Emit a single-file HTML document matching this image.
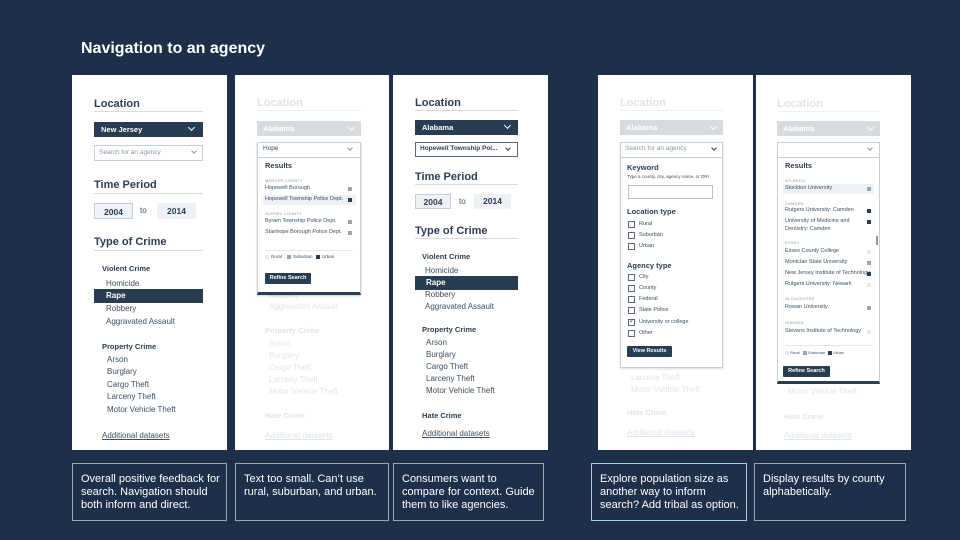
<!DOCTYPE html>
<html><head><meta charset="utf-8"><style>
*{margin:0;padding:0;box-sizing:border-box}
body{width:960px;height:540px;background:#1e2f4a;position:relative;overflow:hidden;font-family:"Liberation Sans",Arial,sans-serif}
.a{position:absolute}
.p{position:absolute;top:75px;height:375px;background:#fff}
.t{position:absolute;white-space:nowrap;line-height:1}
.h{font-size:11px;font-weight:bold;color:#2b3e52}
.ul{position:absolute;height:1px;background:#d5dbe2}
.i{font-size:8px;color:#3d4e60}
.sb{font-size:7.5px;font-weight:bold;color:#2b3e52}
.f{color:#dfe4ea!important}
.dk{position:absolute;background:#283c52;color:#fff;font-size:7.5px;font-weight:bold;padding-left:7px}
.box{position:absolute;border:1px solid #c6ced8;background:#fff}
.yr{position:absolute;background:#eef1f5;font-size:8.5px;font-weight:bold;color:#2b3e52;text-align:center}
.chev{position:absolute;width:5px;height:5px;border-right:1.5px solid currentColor;border-bottom:1.5px solid currentColor;transform:rotate(45deg)}
.cap{position:absolute;top:463px;height:58px;border:1.5px solid #9aa6b4;color:#fff;font-size:11px;line-height:13px;padding:9px 0 0 8px;white-space:nowrap}
.tiny{font-size:4px;color:#8a96a4;letter-spacing:.2px}
.r{font-size:5.5px;color:#3d4e60}
.sq{position:absolute;width:4px;height:4px}
.cb{position:absolute;width:7px;height:7px;border:1px solid #5a6878;background:#fff}
.btn{position:absolute;background:#283c52;color:#fff;font-size:5.5px;font-weight:bold;text-align:center;border-radius:1px}
</style></head><body>
<div class="t" style="left:81px;top:41px;font-size:16px;font-weight:bold;color:#fff">Navigation to an agency</div>

<!-- Panel 1 -->
<div class="p" style="left:72px;width:155px"></div>
<div class="t h" style="left:94px;top:99px">Location</div><div class="ul" style="left:94px;top:111px;width:109px"></div>
<div class="dk" style="left:94px;top:122px;width:109px;height:15px;line-height:15px">New Jersey<span class="chev" style="left:95px;top:3px"></span></div>
<div class="box" style="left:94px;top:145px;width:109px;height:16px"></div>
<div class="t" style="left:99px;top:150px;font-size:6.5px;color:#8a96a4">Search for an agency</div><span class="chev" style="left:192px;top:149px;color:#8a96a4;width:4px;height:4px;border-width:1px"></span>
<div class="t h" style="left:94px;top:180px">Time Period</div><div class="ul" style="left:94px;top:193px;width:109px"></div>
<div class="yr" style="left:94px;top:203px;width:39px;height:16px;line-height:16px;border:1px solid #c6ced8">2004</div>
<div class="t i" style="left:140px;top:207px">to</div>
<div class="yr" style="left:157px;top:203px;width:39px;height:16px;line-height:16px">2014</div>
<div class="t h" style="left:94px;top:237px">Type of Crime</div><div class="ul" style="left:94px;top:250px;width:109px"></div>
<div class="t sb" style="left:102px;top:265px">Violent Crime</div>
<div class="t i" style="left:106px;top:280px">Homicide</div>
<div class="dk" style="left:94px;top:289px;width:109px;height:14px;line-height:14px;font-size:8px;padding-left:12px">Rape</div>
<div class="t i" style="left:106px;top:305px">Robbery</div>
<div class="t i" style="left:106px;top:318px">Aggravated Assault</div>
<div class="t sb" style="left:102px;top:343px">Property Crime</div>
<div class="t i" style="left:107px;top:356px">Arson</div>
<div class="t i" style="left:107px;top:368px">Burglary</div>
<div class="t i" style="left:107px;top:381px">Cargo Theft</div>
<div class="t i" style="left:107px;top:393px">Larceny Theft</div>
<div class="t i" style="left:107px;top:406px">Motor Vehicle Theft</div>
<div class="t i" style="left:102px;top:432px;text-decoration:underline">Additional datasets</div>

<!-- Panel 2 -->
<div class="p" style="left:235px;width:154px"></div>
<div class="t h f" style="left:257px;top:98px">Location</div><div class="ul" style="left:257px;top:110px;width:104px;background:#eef1f4"></div>
<div class="a" style="left:257px;top:121px;width:104px;height:15px;background:#d6dbe0;color:#fff;font-size:7.5px;font-weight:bold;line-height:15px;padding-left:6px">Alabama<span class="chev" style="left:92px;top:4px"></span></div>
<div class="t sb f" style="left:265px;top:327px">Property Crime</div>
<div class="t i f" style="left:269px;top:292px">Robbery</div>
<div class="t i f" style="left:269px;top:303px">Aggravated Assault</div>
<div class="t i f" style="left:269px;top:340px">Arson</div>
<div class="t i f" style="left:269px;top:352px">Burglary</div>
<div class="t i f" style="left:269px;top:364px">Cargo Theft</div>
<div class="t i f" style="left:269px;top:376px">Larceny Theft</div>
<div class="t i f" style="left:269px;top:388px">Motor Vehicle Theft</div>
<div class="t sb f" style="left:265px;top:412px">Hate Crime</div>
<div class="t i f" style="left:265px;top:432px;text-decoration:underline">Additional datasets</div>
<div class="box" style="left:257px;top:142px;width:104px;height:153px;border-bottom:3px solid #2b3e52;box-shadow:0 1px 2px rgba(0,0,0,.2)"></div>
<div class="ul" style="left:257px;top:157px;width:104px;background:#c6ced8"></div>
<div class="t" style="left:263px;top:146px;font-size:6.5px;color:#3d4e60">Hope</div><span class="chev" style="left:348px;top:146px;color:#8a96a4;width:4px;height:4px;border-width:1px"></span>
<div class="t" style="left:265px;top:162px;font-size:7.5px;font-weight:bold;color:#2b3e52">Results</div>
<div class="t tiny" style="left:265px;top:179px">MERCER COUNTY</div>
<div class="t r" style="left:265px;top:186px">Hopewell Borough</div><div class="sq" style="left:348px;top:187px;background:#98a4b2"></div>
<div class="a" style="left:263px;top:195px;width:93px;height:10px;background:#eef1f5"></div>
<div class="t r" style="left:265px;top:197px">Hopewell Township Police Dept.</div><div class="sq" style="left:348px;top:198px;background:#283c52"></div>
<div class="t tiny" style="left:265px;top:212px">SUSSEX COUNTY</div>
<div class="t r" style="left:265px;top:219px">Byram Township Police Dept.</div><div class="sq" style="left:348px;top:220px;background:#98a4b2"></div>
<div class="t r" style="left:265px;top:230px">Stanhope Borough Police Dept.</div><div class="sq" style="left:348px;top:231px;background:#98a4b2"></div>
<div class="ul" style="left:265px;top:250px;width:88px;background:#e4e8ec"></div>
<div class="sq" style="left:265px;top:255px;background:#e4e9ef"></div><div class="t r" style="left:271px;top:255px;font-size:4.5px">Rural</div>
<div class="sq" style="left:287px;top:255px;background:#98a4b2"></div><div class="t r" style="left:293px;top:255px;font-size:4.5px">Suburban</div>
<div class="sq" style="left:316px;top:255px;background:#283c52"></div><div class="t r" style="left:322px;top:255px;font-size:4.5px">Urban</div>
<div class="btn" style="left:265px;top:273px;width:46px;height:11px;line-height:11px">Refine Search</div>

<!-- Panel 3 -->
<div class="p" style="left:393px;width:155px"></div>
<div class="t h" style="left:415px;top:98px">Location</div><div class="ul" style="left:415px;top:110px;width:103px"></div>
<div class="dk" style="left:415px;top:120px;width:103px;height:15px;line-height:15px">Alabama<span class="chev" style="left:90px;top:3px"></span></div>
<div class="box" style="left:415px;top:142px;width:103px;height:15px;border-color:#5a6878"></div>
<div class="t" style="left:420px;top:146px;font-size:6.5px;font-weight:bold;color:#2b3e52">Hopewell Township Pol...</div><span class="chev" style="left:506px;top:146px;color:#2b3e52;width:4px;height:4px"></span>
<div class="t h" style="left:415px;top:172px">Time Period</div><div class="ul" style="left:415px;top:184px;width:103px"></div>
<div class="yr" style="left:415px;top:194px;width:36px;height:15px;line-height:15px;border:1px solid #c6ced8">2004</div>
<div class="t i" style="left:459px;top:198px">to</div>
<div class="yr" style="left:474px;top:194px;width:37px;height:15px;line-height:15px">2014</div>
<div class="t h" style="left:415px;top:226px">Type of Crime</div><div class="ul" style="left:415px;top:238px;width:103px"></div>
<div class="t sb" style="left:422px;top:253px">Violent Crime</div>
<div class="t i" style="left:425px;top:267px">Homicide</div>
<div class="dk" style="left:415px;top:276px;width:103px;height:14px;line-height:14px;font-size:8px;padding-left:11px">Rape</div>
<div class="t i" style="left:425px;top:291px">Robbery</div>
<div class="t i" style="left:425px;top:303px">Aggravated Assault</div>
<div class="t sb" style="left:422px;top:326px">Property Crime</div>
<div class="t i" style="left:426px;top:339px">Arson</div>
<div class="t i" style="left:426px;top:351px">Burglary</div>
<div class="t i" style="left:426px;top:363px">Cargo Theft</div>
<div class="t i" style="left:426px;top:375px">Larceny Theft</div>
<div class="t i" style="left:426px;top:387px">Motor Vehicle Theft</div>
<div class="t sb" style="left:422px;top:412px">Hate Crime</div>
<div class="t i" style="left:422px;top:430px;text-decoration:underline">Additional datasets</div>

<!-- Panel 4 -->
<div class="p" style="left:598px;width:155px"></div>
<div class="t h f" style="left:620px;top:98px">Location</div><div class="ul" style="left:620px;top:110px;width:103px;background:#eef1f4"></div>
<div class="a" style="left:620px;top:120px;width:103px;height:15px;background:#d6dbe0;color:#fff;font-size:7.5px;font-weight:bold;line-height:15px;padding-left:6px">Alabama<span class="chev" style="left:91px;top:4px"></span></div>
<div class="t i f" style="left:631px;top:374px">Larceny Theft</div>
<div class="t i f" style="left:631px;top:386px">Motor Vehicle Theft</div>
<div class="t sb f" style="left:627px;top:409px">Hate Crime</div>
<div class="t i f" style="left:627px;top:429px;text-decoration:underline">Additional datasets</div>
<div class="box" style="left:620px;top:142px;width:103px;height:226px;box-shadow:0 1px 2px rgba(0,0,0,.15)"></div>
<div class="ul" style="left:620px;top:157px;width:103px;background:#c6ced8"></div>
<div class="t" style="left:625px;top:146px;font-size:6.5px;color:#8a96a4">Search for an agency</div><span class="chev" style="left:712px;top:146px;color:#2b3e52;width:4px;height:4px"></span>
<div class="t" style="left:627px;top:164px;font-size:7.5px;font-weight:bold;color:#2b3e52">Keyword</div>
<div class="t" style="left:627px;top:175px;font-size:4.5px;color:#3d4e60">Type a county, city, agency name, or ORI</div>
<div class="box" style="left:628px;top:185px;width:85px;height:14px;border-color:#b8c2cc"></div>
<div class="t" style="left:627px;top:208px;font-size:7.5px;font-weight:bold;color:#2b3e52">Location type</div>
<div class="cb" style="left:628px;top:221px"></div><div class="t r" style="left:639px;top:222px">Rural</div>
<div class="cb" style="left:628px;top:232px"></div><div class="t r" style="left:639px;top:233px">Suburban</div>
<div class="cb" style="left:628px;top:243px"></div><div class="t r" style="left:639px;top:244px">Urban</div>
<div class="t" style="left:627px;top:262px;font-size:7.5px;font-weight:bold;color:#2b3e52">Agency type</div>
<div class="cb" style="left:628px;top:274px"></div><div class="t r" style="left:639px;top:275px">City</div>
<div class="cb" style="left:628px;top:285px"></div><div class="t r" style="left:639px;top:286px">County</div>
<div class="cb" style="left:628px;top:296px"></div><div class="t r" style="left:639px;top:297px">Federal</div>
<div class="cb" style="left:628px;top:307px"></div><div class="t r" style="left:639px;top:308px">State Police</div>
<div class="cb" style="left:628px;top:319px"></div><div class="t r" style="left:629px;top:318px;font-size:7px">✓</div><div class="t r" style="left:639px;top:320px">University or college</div>
<div class="cb" style="left:628px;top:330px"></div><div class="t r" style="left:639px;top:331px">Other</div>
<div class="btn" style="left:627px;top:346px;width:45px;height:11px;line-height:11px">View Results</div>

<!-- Panel 5 -->
<div class="p" style="left:756px;width:155px"></div>
<div class="t h f" style="left:777px;top:99px">Location</div><div class="ul" style="left:777px;top:111px;width:103px;background:#eef1f4"></div>
<div class="a" style="left:777px;top:121px;width:103px;height:15px;background:#d6dbe0;color:#fff;font-size:7.5px;font-weight:bold;line-height:15px;padding-left:6px">Alabama<span class="chev" style="left:91px;top:4px"></span></div>
<div class="t i f" style="left:788px;top:388px">Motor Vehicle Theft</div>
<div class="t sb f" style="left:784px;top:413px">Hate Crime</div>
<div class="t i f" style="left:784px;top:432px;text-decoration:underline">Additional datasets</div>
<div class="box" style="left:777px;top:142px;width:103px;height:242px;border-bottom:3px solid #2b3e52"></div>
<div class="ul" style="left:777px;top:157px;width:103px;background:#c6ced8"></div>
<span class="chev" style="left:868px;top:146px;color:#8a96a4;width:4px;height:4px;border-width:1px"></span>
<div class="t" style="left:785px;top:162px;font-size:7.5px;font-weight:bold;color:#2b3e52">Results</div>
<div class="a" style="left:876px;top:236px;width:2px;height:9px;background:#8a96a4"></div>
<div class="t tiny" style="left:785px;top:179px">ATLANTIC</div>
<div class="a" style="left:783px;top:184px;width:91px;height:10px;background:#eef1f5"></div>
<div class="t r" style="left:785px;top:186px">Stockton University</div><div class="sq" style="left:867px;top:187px;background:#98a4b2"></div>
<div class="t tiny" style="left:785px;top:202px">CAMDEN</div>
<div class="t r" style="left:785px;top:208px">Rutgers University: Camden</div><div class="sq" style="left:867px;top:209px;background:#283c52"></div>
<div class="t r" style="left:785px;top:219px">University of Medicine and</div><div class="sq" style="left:867px;top:220px;background:#283c52"></div>
<div class="t r" style="left:785px;top:227px">Dentistry: Camden</div>
<div class="t tiny" style="left:785px;top:241px">ESSEX</div>
<div class="t r" style="left:785px;top:249px">Essex County College</div><div class="sq" style="left:867px;top:250px;background:#e4e9ef"></div>
<div class="t r" style="left:785px;top:260px">Montclair State University</div><div class="sq" style="left:867px;top:261px;background:#98a4b2"></div>
<div class="t r" style="left:785px;top:271px">New Jersey Institute of Technology</div><div class="sq" style="left:867px;top:272px;background:#283c52"></div>
<div class="t r" style="left:785px;top:282px">Rutgers University: Newark</div><div class="sq" style="left:867px;top:283px;background:#e4e9ef"></div>
<div class="t tiny" style="left:785px;top:297px">GLOUCESTER</div>
<div class="t r" style="left:785px;top:305px">Rowan University</div><div class="sq" style="left:867px;top:306px;background:#98a4b2"></div>
<div class="t tiny" style="left:785px;top:321px">HUDSON</div>
<div class="t r" style="left:785px;top:329px">Stevens Institute of Technology</div><div class="sq" style="left:867px;top:330px;background:#e4e9ef"></div>
<div class="ul" style="left:785px;top:345px;width:88px;background:#e4e8ec"></div>
<div class="sq" style="left:785px;top:351px;background:#e4e9ef"></div><div class="t r" style="left:790px;top:351px;font-size:4px">Rural</div>
<div class="sq" style="left:803px;top:351px;background:#98a4b2"></div><div class="t r" style="left:808px;top:351px;font-size:4px">Suburban</div>
<div class="sq" style="left:828px;top:351px;background:#283c52"></div><div class="t r" style="left:833px;top:351px;font-size:4px">Urban</div>
<div class="btn" style="left:783px;top:366px;width:47px;height:11px;line-height:11px">Refine Search</div>

<!-- Captions -->
<div class="cap" style="left:72px;width:155px">Overall positive feedback for<br>search. Navigation should<br>both inform and direct.</div>
<div class="cap" style="left:235px;width:154px">Text too small. Can’t use<br>rural, suburban, and urban.</div>
<div class="cap" style="left:393px;width:151px">Consumers want to<br>compare for context. Guide<br>them to like agencies.</div>
<div class="cap" style="left:591px;width:156px;border-color:#a8d0e0">Explore population size as<br>another way to inform<br>search? Add tribal as option.</div>
<div class="cap" style="left:754px;width:152px">Display results by county<br>alphabetically.</div>
</body></html>
